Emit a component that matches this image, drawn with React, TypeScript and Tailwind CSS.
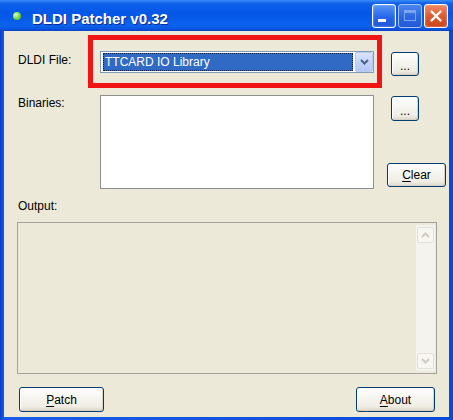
import React from "react";

const xpButton =
  "flex items-center justify-center rounded-[3px] border border-[#003c74] bg-[linear-gradient(180deg,#ffffff_0%,#f6f5f0_40%,#efede4_80%,#dcd7c8_100%)] text-[12px] leading-[14px] text-black shadow-[inset_-1px_-1px_0_#d6d0c5,inset_1px_1px_0_#ffffff]";

const Chevron = ({ up, color }: { up?: boolean; color: string }) => (
  <svg width="9" height="6" viewBox="0 0 9 6">
    <polyline
      points={up ? "1,5 4.5,1.5 8,5" : "1,1 4.5,4.5 8,1"}
      fill="none"
      stroke={color}
      strokeWidth="2"
    />
  </svg>
);

const TitleBar = () => (
  <div className="flex h-[31px] items-start bg-[linear-gradient(180deg,#3a8cf6_0%,#0d5fea_12%,#0457e6_45%,#0b62ee_82%,#0a56e0_92%,#0844c9_100%)]">
    <div className="ml-[13px] mt-[12px] h-[8px] w-[8px] rounded-full bg-[radial-gradient(circle_at_35%_35%,#dcffc0_0%,#7ee052_45%,#3e9f1e_100%)]" />
    <span className="ml-[11px] mt-[10px] text-[15px] font-bold leading-[17px] text-white [text-shadow:1px_1px_0_#0b2a94]">
      DLDI Patcher v0.32
    </span>
    <div className="ml-auto mr-[5px] mt-[4px] flex gap-[2px]">
      <div className="flex h-[24px] w-[24px] rounded-[3px] border border-white bg-[linear-gradient(180deg,#5b96fa_0%,#2766ea_55%,#1e57d8_100%)] shadow-[inset_0_0_2px_#a7c6ff]">
        <svg width="22" height="22" viewBox="0 0 22 22">
          <rect x="5" y="14" width="8" height="3" fill="#ffffff" />
        </svg>
      </div>
      <div className="flex h-[24px] w-[24px] rounded-[3px] border border-[#a9c1f2] bg-[linear-gradient(180deg,#4b86f0_0%,#2c66e0_55%,#2459d4_100%)]">
        <svg width="22" height="22" viewBox="0 0 22 22">
          <rect x="5.5" y="5.5" width="11" height="10" fill="none" stroke="#7fa5f2" strokeWidth="1" />
          <rect x="5" y="5" width="12" height="3" fill="#7fa5f2" />
        </svg>
      </div>
      <div className="flex h-[24px] w-[24px] rounded-[3px] border border-white bg-[linear-gradient(180deg,#ee8a66_0%,#df5a30_50%,#c8441e_100%)] shadow-[inset_0_0_2px_#ffb49a]">
        <svg width="22" height="22" viewBox="0 0 22 22">
          <path d="M6.5 6.5 L15.5 15.5 M15.5 6.5 L6.5 15.5" stroke="#ffffff" strokeWidth="2.4" strokeLinecap="round" />
        </svg>
      </div>
    </div>
  </div>
);

const Combo = () => (
  <div className="flex h-[22px] w-[274px] items-center border border-[#7f9db9] bg-white">
    <div className="ml-[2px] flex h-[18px] w-[250px] items-center border border-dotted border-[#0d2256] bg-[#316ac5] pl-[1px] text-white">
      TTCARD IO Library
    </div>
    <div className="ml-auto flex h-[20px] w-[18px] items-center justify-center rounded-[2px] border border-[#b9c9f0] bg-[linear-gradient(180deg,#d9e4fd_0%,#c3d4fb_50%,#b4c8f6_100%)]">
      <Chevron color="#4d6185" />
    </div>
  </div>
);

export default function App() {
  return (
    <div className="flex h-[420px] w-[453px] flex-col bg-[linear-gradient(90deg,#0a3fcf_0%,#1a5ce6_1%,#0b4ad9_100%)] font-['Liberation_Sans',Arial,sans-serif]">
      <TitleBar />
      <div className="mx-[4px] flex h-[386px] flex-col bg-[#ece9d8] pl-[13px] text-[12px] leading-[14px] text-black">
        <div className="mt-[4px] flex items-start">
          <div className="w-[71px] pl-[1px] pt-[18px]">DLDI File:</div>
          <div className="h-[53px] w-[294px] border-[5px] border-[#f01414] pl-[7px] pt-[11px]">
            <Combo />
          </div>
          <button className={`${xpButton} ml-[9px] mt-[17px] h-[24px] w-[28px] pt-[4px] text-[#555]`}>...</button>
        </div>

        <div className="mt-[7px] flex items-start">
          <div className="w-[83px] pl-[1px] pt-[1px]">Binaries:</div>
          <div className="h-[94px] w-[274px] border border-[#8e8f8f] bg-white" />
          <div className="ml-[13px] flex flex-col items-start">
            <button className={`${xpButton} ml-[4px] mt-[1px] h-[25px] w-[28px] pt-[4px] text-[#555]`}>...</button>
            <button className={`${xpButton} mt-[42px] h-[24px] w-[59px]`}>
              <span className="underline underline-offset-2">C</span>lear
            </button>
          </div>
        </div>

        <div className="mt-[10px] pl-[1px]">Output:</div>

        <div className="mt-[9px] flex h-[152px] w-[420px] border border-[#a4a49c] bg-[#ece9d8]">
          <div className="my-[2px] ml-auto mr-[1px] flex w-[19px] flex-col justify-between bg-[#f4f3ee]">
            <div className="mx-auto mt-[2px] flex h-[16px] w-[17px] items-center justify-center rounded-[2px] border border-[#e4e2d8] bg-[#f7f6f1]">
              <Chevron up color="#cfcdc2" />
            </div>
            <div className="mx-auto mb-[2px] flex h-[16px] w-[17px] items-center justify-center rounded-[2px] border border-[#e4e2d8] bg-[#f7f6f1]">
              <Chevron color="#cfcdc2" />
            </div>
          </div>
        </div>

        <div className="mt-[13px] flex w-[418px] justify-between">
          <button className={`${xpButton} ml-[2px] h-[25px] w-[85px]`}>
            <span className="underline underline-offset-2">P</span>atch
          </button>
          <button className={`${xpButton} h-[25px] w-[79px]`}>
            <span className="underline underline-offset-2">A</span>bout
          </button>
        </div>
      </div>
    </div>
  );
}
